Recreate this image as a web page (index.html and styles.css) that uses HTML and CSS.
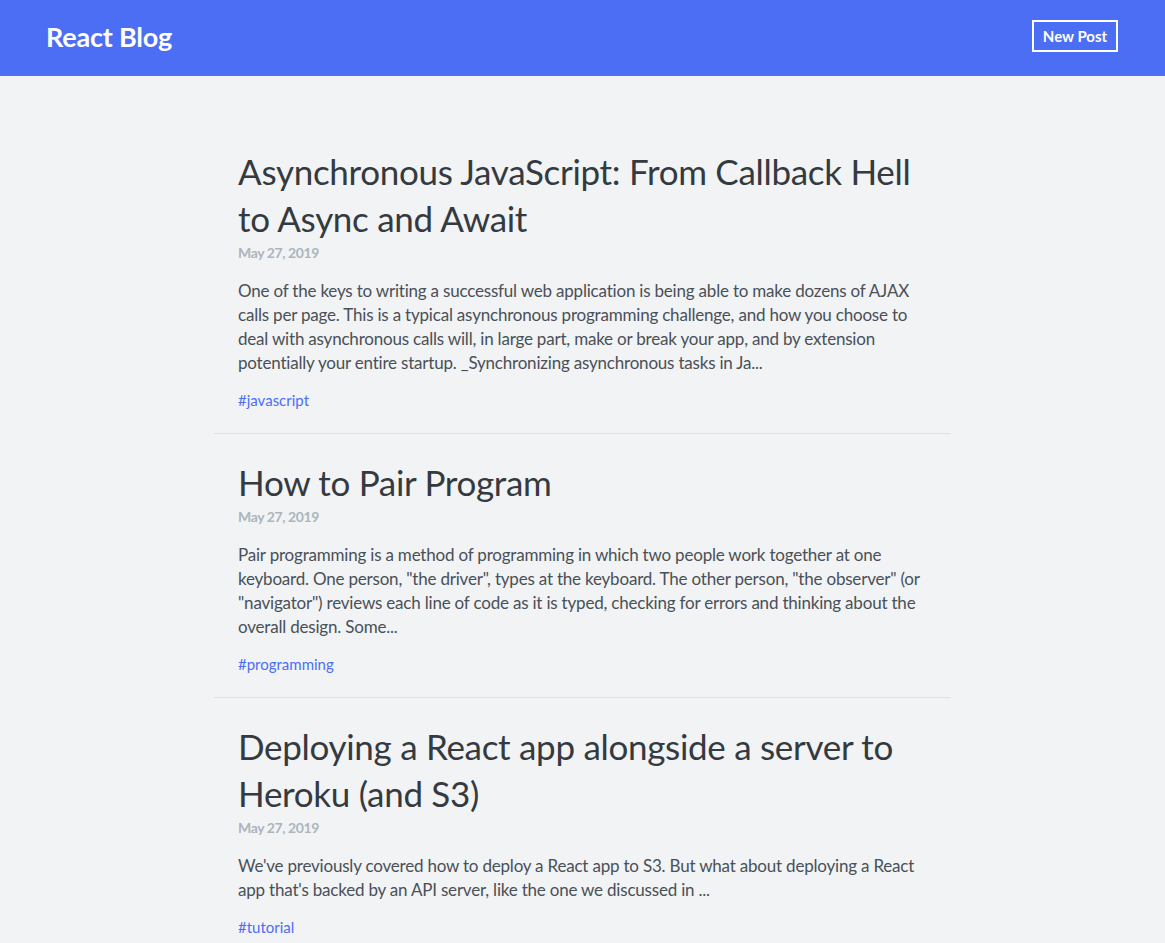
FILE: index.html
```html
<!DOCTYPE html>
<html lang="en">
<head>
<meta charset="utf-8">
<title>React Blog</title>
<link rel="stylesheet" href="styles.css">
</head>
<body>
<header class="topbar">
  <a class="brand" href="#">React Blog</a>
  <a class="new-post" href="#">New Post</a>
</header>
<main class="posts">
  <article class="post">
    <h2 class="post-title">Asynchronous JavaScript: From Callback Hell to Async and Await</h2>
    <div class="post-date">May 27, 2019</div>
    <p class="post-body">One of the keys to writing a successful web application is being able to make dozens of AJAX calls per page. This is a typical asynchronous programming challenge, and how you choose to deal with asynchronous calls will, in large part, make or break your app, and by extension potentially your entire startup. _Synchronizing asynchronous tasks in Ja...</p>
    <div class="post-tags"><a href="#">#javascript</a></div>
  </article>
  <article class="post">
    <h2 class="post-title">How to Pair Program</h2>
    <div class="post-date">May 27, 2019</div>
    <p class="post-body">Pair programming is a method of programming in which two people work together at one keyboard. One person, "the driver", types at the keyboard. The other person, "the observer" (or "navigator") reviews each line of code as it is typed, checking for errors and thinking about the overall design. Some...</p>
    <div class="post-tags"><a href="#">#programming</a></div>
  </article>
  <article class="post">
    <h2 class="post-title">Deploying a React app alongside a server to Heroku (and S3)</h2>
    <div class="post-date">May 27, 2019</div>
    <p class="post-body">We've previously covered how to deploy a React app to S3. But what about deploying a React app that's backed by an API server, like the one we discussed in ...</p>
    <div class="post-tags"><a href="#">#tutorial</a></div>
  </article>
</main>
</body>
</html>
```

FILE: styles.css
```css
* { box-sizing: border-box; }

html, body {
  margin: 0;
  padding: 0;
}

body {
  background: #f1f3f5;
  font-family: Lato, "Open Sans", sans-serif;
  color: #495057;
}

a { text-decoration: none; }

.topbar {
  height: 76px;
  background: #4c6ef5;
  display: flex;
  align-items: center;
  justify-content: space-between;
  padding: 0 47px 4px 46px;
}

.brand {
  color: #fff;
  font-size: 27px;
  font-weight: 700;
  letter-spacing: -0.2px;
}

.new-post {
  color: #fff;
  font-size: 15px;
  font-weight: 700;
  border: 2px solid #fff;
  height: 32px;
  width: 86px;
  display: flex;
  align-items: center;
  justify-content: center;
}

.posts {
  width: 737px;
  margin: 0 auto;
  padding-top: 47px;
}

.post {
  padding: 25px 25px 23px 24px;
  border-bottom: 1px solid #dee2e6;
}

.post-title {
  margin: 0;
  font-size: 35px;
  line-height: 47px;
  font-weight: 400;
  color: #343a40;
  letter-spacing: -0.3px;
}

.post-date {
  margin-top: 1px;
  font-size: 14px;
  line-height: 20px;
  font-weight: 700;
  color: #adb5bd;
  letter-spacing: -0.4px;
}

.post-body {
  margin: 16px 0 0;
  font-size: 17px;
  line-height: 24px;
  color: #495057;
  letter-spacing: -0.2px;
}

.post-tags {
  margin-top: 15px;
  font-size: 15px;
  line-height: 20px;
}

.post-tags a {
  color: #4c6ef5;
}
```
